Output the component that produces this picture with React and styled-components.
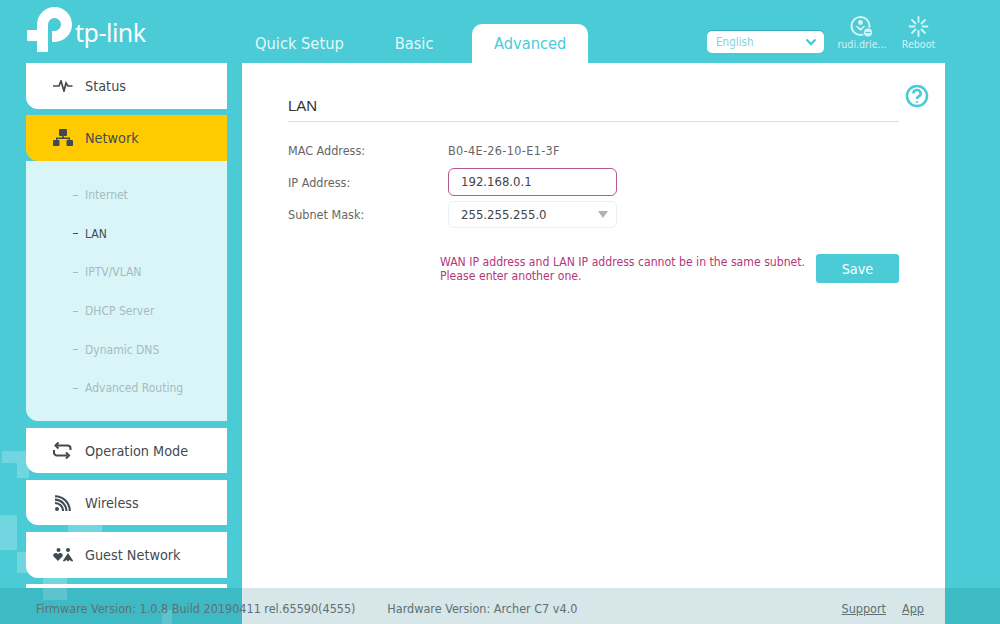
import React from 'react';
import styled, { createGlobalStyle } from 'styled-components';

const TEAL = '#4acbd6';
const DARK = '#3f4b50';

const GlobalStyle = createGlobalStyle`
  html, body {
    margin: 0;
    padding: 0;
    background: ${TEAL};
  }
  * {
    box-sizing: border-box;
  }
`;

const Page = styled.div`
  position: relative;
  width: 1000px;
  height: 624px;
  overflow: hidden;
  background: ${TEAL};
  font-family: 'DejaVu Sans', Verdana, sans-serif;
  font-stretch: condensed;
  color: ${DARK};
`;

const Pattern = styled.svg`
  position: absolute;
  left: 0;
  top: 0;
`;

const Header = styled.header`
  position: relative;
  display: flex;
  align-items: flex-end;
  height: 63px;
  padding-left: 26px;
  padding-right: 64px;
`;

const Brand = styled.div`
  display: flex;
  align-items: flex-start;
  align-self: flex-start;
  width: 229px;
  padding-top: 6px;
`;

const Wordmark = styled.span`
  margin: 10px 0 0 -1px;
  font-family: 'Noto Sans', sans-serif;
  font-stretch: normal;
  font-size: 25px;
  line-height: 32px;
  letter-spacing: -0.5px;
  color: #fff;
`;

const TabList = styled.nav`
  display: flex;
  align-items: flex-end;
  gap: 38.5px;
`;

const Tab = styled.div`
  height: 39px;
  padding: 0 ${(p) => (p.$active ? '22px' : '0')};
  margin-right: ${(p) => (p.$first ? '12.5px' : '0')};
  border-radius: 10px 10px 0 0;
  background: ${(p) => (p.$active ? '#fff' : 'transparent')};
  color: ${(p) => (p.$active ? TEAL : '#e4f8fa')};
  font-size: 16.3px;
  line-height: 40px;
`;

const Tools = styled.div`
  display: flex;
  align-items: flex-start;
  align-self: flex-start;
  margin-left: auto;
  padding-top: 15px;
`;

const Language = styled.div`
  display: flex;
  align-items: center;
  justify-content: space-between;
  width: 117px;
  height: 22px;
  margin: 16px 14px 0 0;
  padding: 0 7px 0 9px;
  border-radius: 5px;
  background: #fff;
  box-shadow: 0 -1px 0 #37adba;
  color: #7fd6df;
  font-size: 11.6px;
`;

const Tool = styled.div`
  display: flex;
  flex-direction: column;
  align-items: center;
  width: ${(p) => p.$width}px;
  margin-right: ${(p) => p.$gap || 0}px;
  color: #d4f3f6;
  font-size: 10.6px;
  line-height: 10px;
  white-space: nowrap;
`;

const Body = styled.div`
  display: flex;
  padding-left: 26px;
`;

const Sidebar = styled.aside`
  flex: none;
  width: 201px;
  height: 525px;
  overflow: hidden;
`;

const MenuItem = styled.div`
  display: flex;
  align-items: center;
  flex: none;
  height: 45.5px;
  margin-bottom: ${(p) => (p.$open ? '0' : '6.7px')};
  padding-left: 26px;
  border-radius: 0 0 0 12px;
  background: ${(p) => (p.$active ? '#ffcb00' : '#fff')};
  font-size: 14.3px;
  color: ${DARK};
`;

const MenuIcon = styled.span`
  display: flex;
  justify-content: center;
  width: 21px;
  margin-right: 12px;
`;

const SubMenu = styled.div`
  margin-bottom: 7.2px;
  padding: 15px 0 12.8px;
  border-radius: 0 0 0 12px;
  background: #daf5f7;
`;

const SubItem = styled.div`
  display: flex;
  align-items: center;
  height: 38.7px;
  padding-left: 47px;
  font-size: 12px;
  color: ${(p) => (p.$active ? DARK : '#a5bbbe')};

  &::before {
    content: '';
    width: 5px;
    height: 1px;
    margin-right: 7px;
    background: currentColor;
  }
`;

const Panel = styled.main`
  position: relative;
  flex: none;
  width: 703px;
  height: 561px;
  margin-left: 15px;
  padding: 0 46px;
  background: #fff;
`;

const HelpIcon = styled.svg`
  position: absolute;
  top: 21px;
  right: 16px;
`;

const Title = styled.h1`
  height: 59px;
  margin: 0;
  padding-top: 34px;
  border-bottom: 1px solid #dcdfe0;
  font-family: 'Liberation Sans', Arial, sans-serif;
  font-stretch: normal;
  font-size: 15px;
  font-weight: 400;
  line-height: 18px;
  color: #333;
`;

const Form = styled.div`
  display: grid;
  grid-template-columns: 160px 169px;
  grid-auto-rows: 28px;
  row-gap: 4px;
  align-items: center;
  margin-top: 14px;
  font-size: 12.5px;
`;

const Label = styled.div`
  padding-top: 1px;
  color: #666;
`;

const Value = styled.div`
  padding-top: 1px;
  color: #666;
  letter-spacing: 0.35px;
`;

const Input = styled.div`
  height: 28px;
  padding-left: 12px;
  border: 1px solid #b4588f;
  border-radius: 6px;
  color: #444;
  font-size: 13px;
  line-height: 26px;
`;

const Select = styled.div`
  display: flex;
  align-items: center;
  justify-content: space-between;
  align-self: end;
  height: 27px;
  padding: 0 8px 0 12px;
  border: 1px solid #edf0f1;
  border-radius: 6px;
  color: #444;
  font-size: 13px;
`;

const Arrow = styled.span`
  width: 0;
  height: 0;
  border-left: 5.5px solid transparent;
  border-right: 5.5px solid transparent;
  border-top: 7px solid #a9b4b7;
`;

const Actions = styled.div`
  display: flex;
  align-items: flex-start;
  margin-top: 26px;
  margin-left: 152px;
`;

const ErrorText = styled.div`
  padding-top: 2px;
  color: #b5377c;
  font-size: 12.15px;
  line-height: 13.5px;
  white-space: nowrap;
`;

const SaveButton = styled.button`
  width: 83px;
  height: 29px;
  margin-left: auto;
  padding: 0;
  border: 0;
  border-radius: 3px;
  background: ${TEAL};
  color: #fff;
  font-family: inherit;
  font-stretch: inherit;
  font-size: 14.3px;
`;

const Footer = styled.footer`
  position: absolute;
  left: 0;
  right: 0;
  bottom: 0;
  display: flex;
  align-items: center;
  height: 36px;
  padding: 5px 76px 0 36px;
  background: rgba(0, 93, 106, 0.155);
  color: #5f7074;
  font-size: 12.5px;
`;

const Version = styled.span`
  width: ${(p) => p.$width}px;
  white-space: nowrap;
`;

const FooterLink = styled.a`
  margin-left: ${(p) => p.$gap}px;
  color: #5f7074;
  text-decoration: underline;
`;

const squares = [
  [2, 451, 24, 12],
  [17, 463, 12, 15],
  [0, 515, 17, 35],
  [17, 552, 12, 21],
  [68, 525, 34, 7],
  [43, 578, 24, 22],
  [162, 610, 10, 14],
];

const Logo = () => (
  <svg width="50" height="48" viewBox="0 0 50 48">
    <rect x="1" y="24" width="20" height="11" rx="1" fill="#fff" />
    <path
      d="M16.5 46 V18.5 A12 12 0 1 1 28.5 30.5 H26"
      fill="none"
      stroke="#fff"
      strokeWidth="11"
    />
  </svg>
);

const UserIcon = () => (
  <svg width="24" height="24" viewBox="0 0 24 24">
    <circle cx="10.5" cy="11" r="9" fill="none" stroke="#d8f4f6" strokeWidth="2" />
    <circle cx="10.5" cy="7.5" r="2.4" fill="#d8f4f6" />
    <path d="M5.5 11 L10.5 16 L15.5 11 L13.5 11 L10.5 13.5 L7.5 11 Z" fill="#d8f4f6" />
    <circle cx="18" cy="17.5" r="4.6" fill="#d8f4f6" stroke={TEAL} strokeWidth="1" />
    <path d="M15.5 17.5 H20.5" stroke={TEAL} strokeWidth="1.2" />
  </svg>
);

const RebootIcon = () => (
  <svg width="24" height="24" viewBox="0 0 24 24" fill="none" stroke="#d8f4f6" strokeWidth="1.8" strokeLinecap="round">
    <path d="M11.5 2 V7" />
    <path d="M11.5 16 V21" />
    <path d="M2.5 11.5 H7.5" />
    <path d="M15.5 11.5 H20.5" />
    <path d="M5 5 L8.5 8.5" />
    <path d="M18 5 L14.5 8.5" />
    <path d="M5 18 L8.5 14.5" />
    <path d="M18 18 L14.5 14.5" />
  </svg>
);

const Chevron = () => (
  <svg width="12" height="8" viewBox="0 0 12 8">
    <path d="M1.5 1.5 L6 6 L10.5 1.5" fill="none" stroke={TEAL} strokeWidth="2.4" />
  </svg>
);

const StatusIcon = () => (
  <svg width="20" height="12" viewBox="0 0 20 12" fill="none" stroke={DARK} strokeWidth="1.7">
    <path d="M0 6 H6 L8 1 L11 11 L13 3 L15 6 H19.5" />
  </svg>
);

const NetworkIcon = () => (
  <svg width="20" height="17" viewBox="0 0 20 17" fill={DARK}>
    <rect x="6" y="0" width="8" height="7" rx="1" />
    <rect x="0" y="11" width="6.5" height="6" rx="1" />
    <rect x="13.5" y="11" width="6.5" height="6" rx="1" />
    <path d="M9.2 7 H10.8 V8.6 H17 V11 H15.6 V10 H4.4 V11 H3 V8.6 H9.2 Z" />
  </svg>
);

const ModeIcon = () => (
  <svg width="19" height="17" viewBox="0 0 19 17" fill="none" stroke={DARK} strokeWidth="2.1">
    <path d="M4 3.5 H14.5 A3 3 0 0 1 17.5 6.5 V8" />
    <path d="M14.5 13.5 H4 A3 3 0 0 1 1 10.5 V8" />
    <path d="M5.5 0.5 L2.5 3.5 L5.5 6.5" />
    <path d="M13 10.5 L16 13.5 L13 16.5" />
  </svg>
);

const WirelessIcon = () => (
  <svg width="16" height="16" viewBox="0 0 16 16" fill="none" stroke={DARK} strokeWidth="2.1">
    <circle cx="2" cy="14" r="2" fill={DARK} stroke="none" />
    <path d="M0 8 A8 8 0 0 1 8 16" />
    <path d="M0 4.6 A11.4 11.4 0 0 1 11.4 16" />
    <path d="M0 1.2 A14.8 14.8 0 0 1 14.8 16" />
  </svg>
);

const GuestIcon = () => (
  <svg width="20" height="14" viewBox="0 0 20 14" fill={DARK}>
    <circle cx="5.5" cy="2" r="2" />
    <circle cx="15" cy="2" r="2" />
    <path d="M5 13 L0.6 8.6 A2.4 2.4 0 0 1 5 6.4 A2.4 2.4 0 0 1 9.4 8.6 Z" />
    <path d="M15 5 L20 12.5 A1 1 0 0 1 19 13.5 L16.5 12 L15 13.5 L13.5 12 L11 13.5 A1 1 0 0 1 10 12.5 Z" />
  </svg>
);

const menuBefore = [
  { label: 'Status', icon: <StatusIcon /> },
  { label: 'Network', icon: <NetworkIcon />, active: true, open: true },
];

const subItems = ['Internet', 'LAN', 'IPTV/VLAN', 'DHCP Server', 'Dynamic DNS', 'Advanced Routing'];

const menuAfter = [
  { label: 'Operation Mode', icon: <ModeIcon /> },
  { label: 'Wireless', icon: <WirelessIcon /> },
  { label: 'Guest Network', icon: <GuestIcon /> },
  { label: '', icon: null },
];

const renderItem = (item) => (
  <MenuItem key={item.label} $active={item.active} $open={item.open}>
    <MenuIcon>{item.icon}</MenuIcon>
    {item.label}
  </MenuItem>
);

export default function App() {
  return (
    <Page>
      <GlobalStyle />
      <Pattern width="1000" height="624">
        {squares.map(([x, y, w, h]) => (
          <rect key={`${x}-${y}`} x={x} y={y} width={w} height={h} fill="#fff" opacity="0.22" />
        ))}
      </Pattern>

      <Header>
        <Brand>
          <Logo />
          <Wordmark>tp-link</Wordmark>
        </Brand>
        <TabList>
          <Tab $first>Quick Setup</Tab>
          <Tab>Basic</Tab>
          <Tab $active>Advanced</Tab>
        </TabList>
        <Tools>
          <Language>
            English
            <Chevron />
          </Language>
          <Tool $width={48} $gap={15}>
            <UserIcon />
            rudi.drie...
          </Tool>
          <Tool $width={35}>
            <RebootIcon />
            Reboot
          </Tool>
        </Tools>
      </Header>

      <Body>
        <Sidebar>
          {menuBefore.map(renderItem)}
          <SubMenu>
            {subItems.map((name) => (
              <SubItem key={name} $active={name === 'LAN'}>
                {name}
              </SubItem>
            ))}
          </SubMenu>
          {menuAfter.map(renderItem)}
        </Sidebar>

        <Panel>
          <HelpIcon width="24" height="24" viewBox="0 0 24 24" fill="none" stroke={TEAL} strokeWidth="2.6">
            <circle cx="12" cy="12" r="10" />
            <path d="M8.4 9.5 A3.6 3.4 0 1 1 13.5 12.5 C12.5 13 12 13.6 12 15" />
            <circle cx="12" cy="18" r="1.1" fill={TEAL} stroke="none" />
          </HelpIcon>
          <Title>LAN</Title>
          <Form>
            <Label>MAC Address:</Label>
            <Value>B0-4E-26-10-E1-3F</Value>
            <Label>IP Address:</Label>
            <Input>192.168.0.1</Input>
            <Label>Subnet Mask:</Label>
            <Select>
              255.255.255.0
              <Arrow />
            </Select>
          </Form>
          <Actions>
            <ErrorText>
              WAN IP address and LAN IP address cannot be in the same subnet.
              <br />
              Please enter another one.
            </ErrorText>
            <SaveButton>Save</SaveButton>
          </Actions>
        </Panel>
      </Body>

      <Footer>
        <Version $width={352}>Firmware Version: 1.0.8 Build 20190411 rel.65590(4555)</Version>
        <Version $width={455}>Hardware Version: Archer C7 v4.0</Version>
        <FooterLink $gap={0}>Support</FooterLink>
        <FooterLink $gap={16}>App</FooterLink>
      </Footer>
    </Page>
  );
}
